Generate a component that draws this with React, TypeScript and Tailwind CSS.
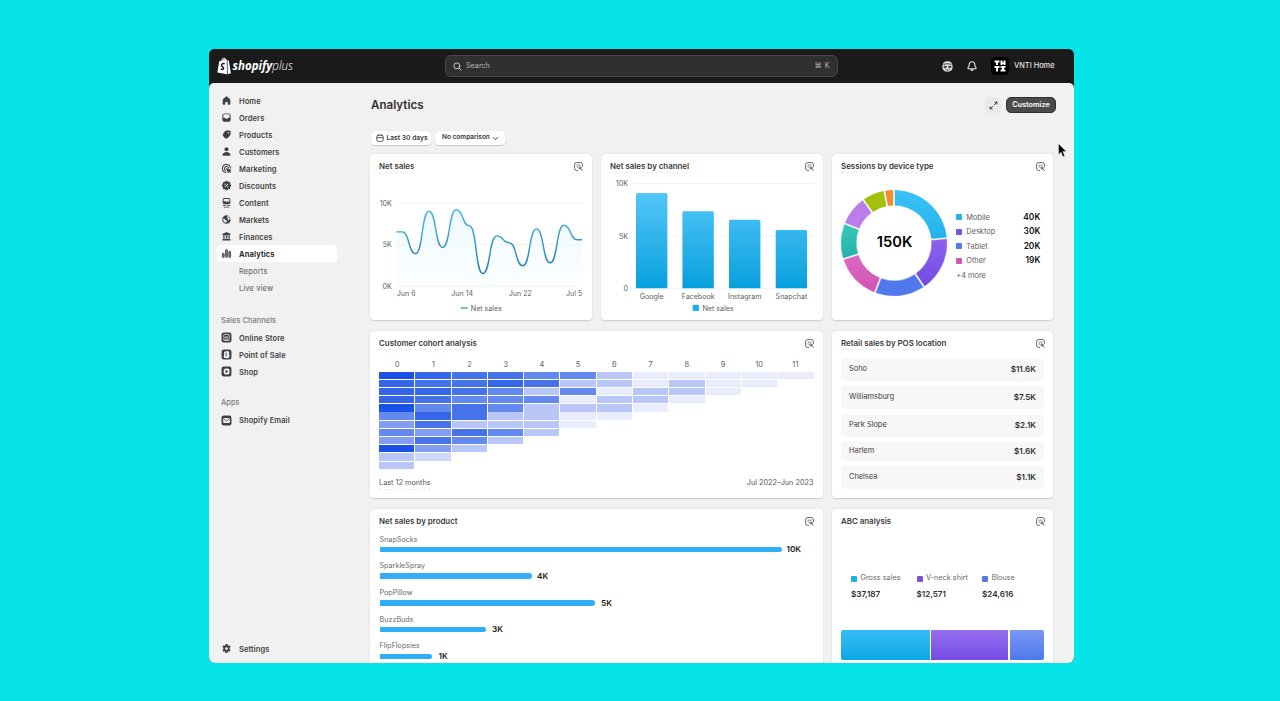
import React from "react";

const Svg = ({ children }: { children: React.ReactNode }) => (
  <svg viewBox="0 0 20 20" className="size-[11px] shrink-0" fill="currentColor">
    {children}
  </svg>
);

const HomeIcon = () => (
  <Svg>
    <path d="M8.6 3.1a2.1 2.1 0 0 1 2.8 0l4.6 4.3c.6.6 1 1.4 1 2.2V16c0 .8-.6 1.5-1.4 1.5h-2.4c-.5 0-.9-.4-.9-.9v-3.1c0-.6-.4-1-1-1H8.700c-.6 0-1 .4-1 1v3.100c0 .5-.4.9-.9.9H4.400C3.600 17.500 3 16.800 3 16V9.600c0-.8.4-1.600 1-2.200z" />
  </Svg>
);
const OrdersIcon = () => (
  <Svg>
    <path fillRule="evenodd" d="M6 2.500h8A3.500 3.500 0 0 1 17.500 6v8a3.500 3.500 0 0 1-3.500 3.500H6A3.500 3.500 0 0 1 2.500 14V6A3.500 3.500 0 0 1 6 2.500zM4.300 6v4.500h2.500c.7 0 1 .4 1.200 1 .3.700.8 1 2 1s1.700-.3 2-1c.2-.6.5-1 1.200-1h2.500V6c0-1-.8-1.800-1.700-1.800H6C5.100 4.200 4.300 5 4.300 6z" />
  </Svg>
);
const ProductsIcon = () => (
  <Svg>
    <path fillRule="evenodd" d="M10.500 2.700h4.700a2.300 2.300 0 0 1 2.300 2.300v3.700c0 1.300-.5 2.500-1.400 3.400l-4.200 4.200a3.400 3.400 0 0 1-4.800 0l-3-3a3.400 3.400 0 0 1 0-4.800l3-4.400c.9-.9 2.100-1.400 3.400-1.400zM13.600 8a1.300 1.300 0 1 0 0-2.600 1.300 1.300 0 0 0 0 2.600z" />
  </Svg>
);
const PersonIcon = () => (
  <Svg>
    <circle cx="10" cy="6" r="3.700" />
    <path d="M2.800 15.400c1-3 3.800-4.600 7.200-4.600s6.200 1.600 7.200 4.600c.4 1.200-.5 2.100-1.600 2.100H4.400c-1.100 0-2-.9-1.600-2.100z" />
  </Svg>
);
const TargetIcon = () => (
  <Svg>
    <g fill="none" stroke="currentColor" strokeWidth="1.900" strokeLinecap="round">
      <path d="M17.200 9.300a7.300 7.300 0 1 0-8 7.900" />
      <path d="M13.500 9a3.700 3.700 0 1 0-4.800 4.500" />
    </g>
    <path d="M9.800 9.300l8.400 3c.6.2.6 1 0 1.200l-2 .9 2 2-1.600 1.600-2.100-2-.9 2c-.3.500-1 .5-1.200-.1l-3-8c-.1-.4.100-.7.400-.6z" />
  </Svg>
);
const DiscountIcon = () => (
  <Svg>
    <path fillRule="evenodd" d="M8.200 2.300a2.500 2.500 0 0 1 3.600 0l.8.800h1.200A2.600 2.600 0 0 1 16.800 6v1.200l.9 1a2.500 2.500 0 0 1 0 3.600l-.9.900V14a2.800 2.800 0 0 1-2.800 2.800h-1.300l-.9.900a2.500 2.500 0 0 1-3.600 0l-.9-.9H6A2.800 2.800 0 0 1 3.200 14v-1.300l-.9-.9a2.500 2.500 0 0 1 0-3.600l.9-.9V6A2.800 2.800 0 0 1 6 3.200h1.300zM7.500 8.700a1.200 1.200 0 1 0 0-2.400 1.200 1.200 0 0 0 0 2.400zm5.900-1.100-1-1-5.800 5.800 1 1zm-.9 6.100a1.200 1.200 0 1 0 0-2.400 1.200 1.200 0 0 0 0 2.400z" />
  </Svg>
);
const ContentIcon = () => (
  <Svg>
    <path fillRule="evenodd" d="M6 2h8a3 3 0 0 1 3 3v5a3 3 0 0 1-3 3H6a3 3 0 0 1-3-3V5a3 3 0 0 1 3-3zM4.800 8.500 7 7.200l2.500 2 3-1.400 2.700 1.500V5c0-.8-.5-1.300-1.200-1.300H6c-.7 0-1.200.5-1.200 1.300z" />
    <path d="M3 15h6v1.500H3zM11 15h6v1.500h-6zM5 17.500h10V19H5z" />
  </Svg>
);
const GlobeIcon = () => (
  <Svg>
    <path fillRule="evenodd" d="M10 2.300a7.700 7.700 0 1 0 7.700 7.700l-2.500-.7-1.200 2.400-2.100-1.200.8-2.700-2.200-1.300L12 4.100l2.400.1A7.700 7.700 0 0 0 10 2.300zm-4.800 5 2.300 3.500 2.500.7.700 2.200-1.500 2.300c-3.200-.5-5.400-3.200-5.200-6.500z" />
    <path d="M14.500 4.600l2.500 3-2.200.5-1.300-1.600zM13 13.300l2.800.4-1.700 2z" />
  </Svg>
);
const BankIcon = () => (
  <Svg>
    <path d="M9.300 2.200a1.500 1.500 0 0 1 1.400 0l6 2.900c1.300.6.8 2.500-.6 2.500H3.900c-1.400 0-1.900-1.900-.6-2.500zM4 8.300h2.500v5H4zM8.700 8.300h2.600v5H8.700zM13.500 8.300H16v5h-2.500zM3.700 14.200h12.600c1 0 1.600 3 .3 3H3.400c-1.300 0-.7-3 .3-3z" />
  </Svg>
);
const ChartIcon = () => (
  <Svg>
    <g fill="#8a8a8a" stroke="currentColor" strokeWidth="1.600">
      <rect x="2.500" y="9.500" width="3.200" height="7.800" rx="1.500" />
      <rect x="8.400" y="2.800" width="3.200" height="14.500" rx="1.500" />
      <rect x="14.300" y="6" width="3.200" height="11.300" rx="1.500" />
    </g>
  </Svg>
);
const StoreTile = () => (
  <Svg>
    <rect x="1" y="1" width="18" height="18" rx="4" />
    <g fill="none" stroke="#f1f1f1" strokeWidth="1.300">
      <path d="M5.500 4.500h9l1 4c0 2-2.700 2-2.800 0 0 2-2.700 2-2.700 0 0 2-2.700 2-2.700 0 0 2-2.800 2-2.800 0zM5.200 11v4.500h9.600V11M8.500 15.500v-3h3v3" />
    </g>
  </Svg>
);
const PosTile = () => (
  <Svg>
    <rect x="1" y="1" width="18" height="18" rx="4" />
    <path d="M6 5l6-1.500 2.500 1.500.8 10.500L11 17l-6-1z" fill="#f1f1f1" />
    <path d="M11.200 8c-2.500-.8-3.500 1.200-1.600 2.300 1.800 1 .5 2.800-1.500 1.900" fill="none" stroke="#303030" strokeWidth="1.500" />
  </Svg>
);
const ShopTile = () => (
  <Svg>
    <rect x="1" y="1" width="18" height="18" rx="4" />
    <rect x="5" y="4.500" width="10.500" height="11" rx="3.500" fill="#f1f1f1" />
    <path d="M8.300 7l5 3-5 3z" />
  </Svg>
);
const MailTile = () => (
  <Svg>
    <rect x="1" y="1" width="18" height="18" rx="4" />
    <rect x="4" y="5.500" width="12" height="9" rx="1.500" fill="#f1f1f1" />
    <path d="M4.500 6.500 10 11l5.500-4.500" fill="none" stroke="#303030" strokeWidth="1.300" />
  </Svg>
);
const GearIcon = () => (
  <Svg>
    <path fillRule="evenodd" d="M8.400 2h3.200l.6 2.300 1.200.7 2.300-.7 1.600 2.800-1.600 1.700v2.400l1.600 1.700-1.600 2.800-2.300-.7-1.200.7-.6 2.300H8.400L7.800 15.700 6.600 15l-2.300.7-1.600-2.800 1.600-1.700V8.800L2.700 7.100l1.600-2.800 2.300.7 1.200-.7zM10 12.500a2.500 2.500 0 1 0 0-5 2.500 2.500 0 0 0 0 5z" />
  </Svg>
);

const ReportIcon = () => (
  <svg viewBox="0 0 20 20" className="size-[11px] shrink-0" fill="none" stroke="#484848" strokeWidth="1.500" strokeLinecap="round" strokeLinejoin="round">
    <path d="M8.500 17.200H6.800A4 4 0 0 1 2.800 13.200V6.800a4 4 0 0 1 4-4h6.400a4 4 0 0 1 4 4V10" />
    <path d="M7 7.500h6M7 10.800h1.500" strokeWidth="1.200" />
    <circle cx="12.600" cy="12.600" r="2" />
    <path d="M14.300 14.300l2.600 2.600" />
  </svg>
);

const NAV = [
  { label: "Home", icon: <HomeIcon /> },
  { label: "Orders", icon: <OrdersIcon /> },
  { label: "Products", icon: <ProductsIcon /> },
  { label: "Customers", icon: <PersonIcon /> },
  { label: "Marketing", icon: <TargetIcon /> },
  { label: "Discounts", icon: <DiscountIcon /> },
  { label: "Content", icon: <ContentIcon /> },
  { label: "Markets", icon: <GlobeIcon /> },
  { label: "Finances", icon: <BankIcon /> },
  { label: "Analytics", icon: <ChartIcon />, active: true },
];

function NavItem({ label, icon, active }: { label: string; icon?: React.ReactNode; active?: boolean }) {
  return (
    <div
      className={`flex h-[17px] w-[120px] items-center gap-[7px] rounded-[4px] pl-1 text-[7.500px] tracking-[0.100px] ${
        active ? "bg-white font-bold text-[#303030]" : icon ? "font-semibold text-[#3f3f3f]" : "font-medium text-[#747474]"
      }`}
    >
      <span className="flex size-[11px] text-[#404040]">{icon}</span>
      <span className="pt-[1.500px]">{label}</span>
    </div>
  );
}

function NavHeading({ label, className }: { label: string; className: string }) {
  return (
    <div className={`mb-px flex h-[17px] items-center pt-[1.500px] pl-1 text-[7.500px] font-medium text-[#7c7c7c] ${className}`}>
      {label}
    </div>
  );
}

function Sidebar() {
  return (
    <nav className="flex w-[161px] shrink-0 flex-col pt-[9px] pl-2">
      {NAV.map((n) => (
        <NavItem key={n.label} {...n} />
      ))}
      <NavItem label="Reports" />
      <NavItem label="Live view" />
      <NavHeading label="Sales Channels" className="mt-[15px]" />
      <NavItem label="Online Store" icon={<StoreTile />} />
      <NavItem label="Point of Sale" icon={<PosTile />} />
      <NavItem label="Shop" icon={<ShopTile />} />
      <NavHeading label="Apps" className="mt-[13.500px]" />
      <NavItem label="Shopify Email" icon={<MailTile />} />
      <div className="mt-auto mb-[6px]">
        <NavItem label="Settings" icon={<GearIcon />} />
      </div>
    </nav>
  );
}

function TopBar() {
  return (
    <header className="flex h-[34px] shrink-0 items-center bg-[#1a1a1a] pl-2">
      <svg viewBox="0 0 78 20" className="h-5 w-[78px]">
        <path d="M2.200 5.300 4.200 4.700C4.600 2.900 5.600 1.700 7 1.700c.7 0 1.200.4 1.400 1.100.9.100 1.200.7 1.400 1.100L10 18.300.300 16.600z" fill="#fff" />
        <path d="M10.500 4.300l1.300.3 2.100 12.600-3.200 1.100z" fill="#fff" />
        <path d="M5.100 4.600C5.500 3.400 6.100 2.700 6.800 2.600c.4.300.5.900.5 1.500" fill="none" stroke="#1a1a1a" strokeWidth=".6" />
        <path d="M7.700 7.700C5.700 6.900 4 8.500 4.700 9.900c.6 1.100 2.100 1.400 1.900 2.700-.2 1.200-1.600 1-2.800.2" fill="none" stroke="#1a1a1a" strokeWidth="1.500" />
        <text x="15.500" y="14" textLength="60.500" lengthAdjust="spacingAndGlyphs" fill="#fff" className="font-['Open_Sans'] text-[11.800px] italic">
          <tspan className="font-bold">shopify</tspan>
          <tspan className="font-light">plus</tspan>
        </text>
      </svg>
      <div className="ml-[150px] flex h-[22px] w-[393px] items-center rounded-[6px] border border-[#484848] bg-[#303030] px-[7px] text-[7.200px] text-[#b5b5b5]">
        <svg viewBox="0 0 10 10" className="size-[9px]" fill="none" stroke="#c8c8c8" strokeWidth="1.100" strokeLinecap="round">
          <circle cx="4.300" cy="4.300" r="3.300" />
          <path d="M6.800 6.800l2.400 2.400" />
        </svg>
        <span className="ml-1 pt-[1.500px]">Search</span>
        <span className="ml-auto pt-[1.500px] tracking-[0.500px]">⌘ K</span>
      </div>
      <svg viewBox="0 0 20 20" className="ml-[103px] size-[13px]" fill="#e3e3e3">
        <path d="M3.200 6.500C3 3.600 6 2 10 2s7 1.600 6.800 4.500c1.200 1.300 1.400 3.700.8 6-.4 3.200-3.600 5.500-7.600 5.500s-7.200-2.300-7.600-5.500c-.6-2.300-.4-4.700.8-6z" />
        <g fill="none" stroke="#1a1a1a" strokeWidth="1.300">
          <path d="M4 6.800c3.500-1.300 8.500-1.300 12 0M4.500 9.500l4 .5-.8 2H5.200zM15.500 9.500l-4 .5.8 2h2.500zM7 15c2 .8 4 .8 6 0" />
        </g>
      </svg>
      <svg viewBox="0 0 20 20" className="ml-[11.500px] size-[12px]" fill="none" stroke="#e3e3e3" strokeWidth="1.800" strokeLinejoin="round">
        <path d="M10 3C7 3 5.300 5.200 5.300 8c0 2.500-1 3.300-2 4.700-.6.900 0 1.800 1 1.800h11.400c1 0 1.600-.9 1-1.800-1-1.400-2-2.200-2-4.700C14.700 5.200 13 3 10 3zM8 15c0 3 4 3 4 0" />
      </svg>
      <svg viewBox="0 0 18 18" className="ml-[13.500px] size-[18px]">
        <rect width="18" height="18" rx="4.500" fill="#000" />
        <path d="M3.500 3.500h5v2H7V8H5V5.500H3.500zM9.500 3.500h2v2h1v-2h2V8h-2V7h-1v1h-2zM3.500 9h5v2H7v3.500H5V11H3.500zM9.500 9h5v1.800h-1.300v1.900h1.300v1.800h-5v-1.800h1.300v-1.900H9.500z" fill="#fff" />
      </svg>
      <span className="ml-[5px] text-[7.400px] font-medium text-[#e3e3e3]">VNTI Home</span>
    </header>
  );
}

function Card({ title, className = "", children }: { title: string; className?: string; children: React.ReactNode }) {
  return (
    <section className={`flex flex-col overflow-hidden rounded-[4px] bg-white shadow-[0_0.500px_1.500px_rgba(0,0,0,0.16)] ${className}`}>
      <div className="flex h-[25px] shrink-0 items-center justify-between pr-[7.500px] pl-[9px]">
        <h2 className="border-b border-dashed border-[#ececec] text-[7.900px] leading-[12px] font-semibold text-[#3a3a3a]">{title}</h2>
        <ReportIcon />
      </div>
      {children}
    </section>
  );
}

const LINE: [number, number][] = [
  [402.5, 231.4], [415.7, 253.2], [429.2, 210.8], [442.8, 247], [456.4, 209.3], [469.6, 225.3], [483, 273],
  [497, 235.4], [509.6, 242.4], [523, 265.3], [536.7, 228.4], [550.3, 262.3], [564, 224.8], [577.5, 239.3],
];
const linePath =
  "M396.7 231.4H402.5" +
  LINE.slice(1)
    .map(([x, y], i) => {
      const [px, py] = LINE[i];
      const m = (x - px) * 0.56;
      return `C${px + m} ${py} ${x - m} ${y} ${x} ${y}`;
    })
    .join("") +
  "H582.5";

function NetSales() {
  return (
    <svg viewBox="370.200 178.500 221.500 141" className="h-[141px] w-full" fontSize="7.100" fill="#616161">
      <defs>
        <linearGradient id="area" x1="0" y1="0" x2="0" y2="1">
          <stop offset="0" stopColor="#e6f6ff" stopOpacity=".8" />
          <stop offset="1" stopColor="#f4fbff" stopOpacity=".3" />
        </linearGradient>
        <linearGradient id="stroke" x1="0" y1="0" x2="0" y2="1">
          <stop offset="0" stopColor="#4fb6e0" />
          <stop offset="1" stopColor="#1d7fb0" />
        </linearGradient>
      </defs>
      <path d="M397 202.500H583M397 244H583M397 285.500H583" stroke="#efefef" strokeWidth=".8" />
      <path d={`${linePath}V285.500H396.700Z`} fill="url(#area)" />
      <path d={linePath} fill="none" stroke="url(#stroke)" strokeWidth="1.400" />
      <g textAnchor="end">
        <text x="392" y="205">10K</text>
        <text x="392" y="246.500">5K</text>
        <text x="392" y="288">0K</text>
        <text x="582.500" y="295.500">Jul 5</text>
      </g>
      <text x="397" y="295.500">Jun 6</text>
      <text x="451.500" y="295.500">Jun 14</text>
      <text x="509" y="295.500">Jun 22</text>
      <path d="M461 307.500h7" stroke="#3aa8dc" strokeWidth="1.400" />
      <text x="471" y="310">Net sales</text>
    </svg>
  );
}

const BARS = [
  { label: "Google", x: 636, y: 192.6 },
  { label: "Facebook", x: 682.4, y: 210.7 },
  { label: "Instagram", x: 729, y: 219.3 },
  { label: "Snapchat", x: 775.7, y: 229.4 },
];

function ChannelChart() {
  return (
    <svg viewBox="601 178.500 221.500 141" className="h-[141px] w-full" fontSize="7.100" fill="#616161">
      <defs>
        <linearGradient id="bar" gradientUnits="userSpaceOnUse" x1="0" y1="192" x2="0" y2="288">
          <stop offset="0" stopColor="#54c6f8" />
          <stop offset="1" stopColor="#07a0dc" />
        </linearGradient>
      </defs>
      <path d="M633 183H815M633 235.500H815M633 288.300H815" stroke="#efefef" strokeWidth=".8" />
      {BARS.map((b) => (
        <g key={b.label}>
          <path d={`M${b.x} 287.800V${b.y + 1.5}q0-1.500 1.500-1.500h28.400q1.500 0 1.500 1.500V287.800z`} fill="url(#bar)" />
          <text x={b.x + 15.7} y="298" textAnchor="middle">{b.label}</text>
        </g>
      ))}
      <g textAnchor="end">
        <text x="628" y="185.500">10K</text>
        <text x="628" y="238">5K</text>
        <text x="628" y="290.500">0</text>
      </g>
      <rect x="692.700" y="304.300" width="6.200" height="6.200" rx="1" fill="#1fb0ec" />
      <text x="702.500" y="310">Net sales</text>
    </svg>
  );
}

const ARCS: [number, number, string][] = [
  [0, 84.8, "url(#d0)"],
  [84.8, 145.5, "url(#d1)"],
  [145.5, 201, "#4f78ea"],
  [201, 252.5, "url(#d3)"],
  [252.5, 291.5, "url(#d4)"],
  [291.5, 324.5, "#bb7dea"],
  [324.5, 349.5, "#a3c10c"],
  [349.5, 360, "#f08c35"],
];

function arcPath(a: number, b: number) {
  const R = 52.8;
  const r = 37.8;
  const p = (rad: number, deg: number) => {
    const t = ((deg - 90) * Math.PI) / 180;
    return `${(54 + rad * Math.cos(t)).toFixed(2)} ${(54 + rad * Math.sin(t)).toFixed(2)}`;
  };
  const go = 1.1;
  const gi = 1.5;
  return `M${p(R, a + go)}A${R} ${R} 0 0 1 ${p(R, b - go)}L${p(r, b - gi)}A${r} ${r} 0 0 0 ${p(r, a + gi)}Z`;
}

const DEVICES = [
  { label: "Mobile", value: "40K", dot: "bg-[#22b4ee]" },
  { label: "Desktop", value: "30K", dot: "bg-[#7b52dc]" },
  { label: "Tablet", value: "20K", dot: "bg-[#5579ea]" },
  { label: "Other", value: "19K", dot: "bg-[#cf57b5]" },
];

function Devices() {
  return (
    <div className="flex pt-[10.500px] pl-[8.300px]">
      <svg viewBox="0 0 108 108" className="size-[108px] shrink-0">
        <defs>
          <linearGradient id="d0" x1="0" y1="0" x2="0" y2="1"><stop stopColor="#3bc2f6" /><stop offset="1" stopColor="#22b2ee" /></linearGradient>
          <linearGradient id="d1" x1="0" y1="0" x2="0" y2="1"><stop stopColor="#8b63ec" /><stop offset="1" stopColor="#7549e4" /></linearGradient>
          <linearGradient id="d3" x1="0" y1="0" x2="0" y2="1"><stop stopColor="#dc68c4" /><stop offset="1" stopColor="#d154b2" /></linearGradient>
          <linearGradient id="d4" x1="0" y1="0" x2="0" y2="1"><stop stopColor="#38c8ba" /><stop offset="1" stopColor="#22b3a6" /></linearGradient>
        </defs>
        {ARCS.map(([a, b, c]) => (
          <path key={a} d={arcPath(a, b)} fill={c} stroke={c} strokeWidth=".5" strokeLinejoin="round" />
        ))}
        <text x="54.500" y="58.200" textAnchor="middle" fontSize="14.700" fill="#000" className="font-semibold">150K</text>
      </svg>
      <div className="ml-[8px] flex w-[84px] flex-col pt-[21px]">
        {DEVICES.map((d) => (
          <div key={d.label} className="flex h-[14.500px] items-center text-[7.400px] text-[#616161]">
            <span className={`mr-1 size-[6px] rounded-[1px] ${d.dot}`} />
            {d.label}
            <span className="ml-auto text-[8.400px] font-semibold text-[#111]">{d.value}</span>
          </div>
        ))}
        <div className="flex h-[14.500px] items-center text-[7.400px] text-[#616161]">+4 more</div>
      </div>
    </div>
  );
}

const SHADES: Record<string, string> = {
  A: "bg-[#1c51e8]",
  B: "bg-[#3566e9]",
  C: "bg-[#4672ea]",
  D: "bg-[#6489ee]",
  E: "bg-[#839ef1]",
  F: "bg-[#b8c6f8]",
  G: "bg-[#cfd8fb]",
  H: "bg-[#e8ecfd]",
};
const COHORT = ["ABCCDDFHHHHH", "BCCBCFFHFHH", "BBCDFDHFFH", "BCDDDHFFH", "ADCDFFFH", "DBCFFHH", "ECFFFH", "DECDF", "ECDF", "AEF", "FG", "F"];

function Cohort() {
  return (
    <div className="flex flex-col px-[9px]">
      <div className="grid grid-cols-12 pt-[2.500px]">
        {COHORT.map((_, i) => (
          <span key={i} className="text-center text-[7.500px] leading-[12px] text-[#616161]">{i}</span>
        ))}
      </div>
      <div className="mt-px flex flex-col">
        {COHORT.map((row, i) => (
          <div key={i} className="grid h-[8.200px] grid-cols-12 gap-x-px pb-[0.900px]">
            {row.split("").map((c, j) => (
              <span key={j} className={SHADES[c]} />
            ))}
          </div>
        ))}
      </div>
      <div className="mt-[7px] flex justify-between text-[7.300px] leading-[12px] text-[#555]">
        <span className="border-b border-dashed border-[#ececec]">Last 12 months</span>
        <span>Jul 2022–Jun 2023</span>
      </div>
    </div>
  );
}

const STORES = [
  { name: "Soho", value: "$11.6K", box: "h-[23px] mb-[5px]" },
  { name: "Williamsburg", value: "$7.5K", box: "h-[23px] mb-[5px]" },
  { name: "Park Slope", value: "$2.1K", box: "h-[23px] mb-[5px]" },
  { name: "Harlem", value: "$1.6K", box: "h-[19px] mb-[5px]" },
  { name: "Chelsea", value: "$1.1K", box: "h-[23px]" },
];

const PRODUCTS = [
  { name: "SnapSocks", value: "10K", w: 402, gap: "ml-[5px]" },
  { name: "SparkleSpray", value: "4K", w: 152.5, gap: "ml-[5px]" },
  { name: "PopPillow", value: "5K", w: 215, gap: "ml-[6.500px]" },
  { name: "BuzzBuds", value: "3K", w: 106, gap: "ml-[6.500px]" },
  { name: "FlipFlopsies", value: "1K", w: 52.5, gap: "ml-[6.500px]" },
];

const ABC = [
  { name: "Gross sales", value: "$37,187", dot: "bg-[#1fb0ec]" },
  { name: "V-neck shirt", value: "$12,571", dot: "bg-[#7b52dc]" },
  { name: "Blouse", value: "$24,616", dot: "bg-[#5579ea]" },
];

export default function App() {
  return (
    <div className="flex h-[701px] w-[1280px] justify-start overflow-hidden bg-[#06e3e9] pt-[49px] pl-[209px] font-['Inter',sans-serif]">
      <div className="flex h-[614px] w-[865px] flex-col overflow-hidden rounded-[6px] bg-[#1a1a1a]">
        <TopBar />
        <div className="flex min-h-0 flex-1 rounded-t-[5px] bg-[#f1f1f1]">
          <Sidebar />
          <main className="flex min-w-0 flex-1 flex-col">
            <div className="mt-[14px] flex h-4 shrink-0 items-center pr-[18px] pl-px">
              <h1 className="pt-px text-[11.600px] font-semibold text-[#303030]">Analytics</h1>
              <div className="ml-auto flex size-4 items-center justify-center rounded-[4px] bg-[#e9e9e9]">
                <svg viewBox="0 0 10 10" className="size-[9px]" fill="none" stroke="#303030" strokeWidth="1" strokeLinecap="round" strokeLinejoin="round">
                  <path d="M6.500 1.200h2.300v2.300M8.600 1.400 5.900 4.100M3.500 8.800H1.200V6.500M1.400 8.600l2.700-2.700" />
                </svg>
              </div>
              <div className="ml-[5px] flex h-4 w-[50px] items-center justify-center rounded-[5px] border border-[#303030] bg-[#4a4a4a] text-[7.200px] font-bold text-[#f0f0f0]">
                <span className="pt-px">Customize</span>
              </div>
            </div>
            <div className="mt-[18px] flex h-[14px] shrink-0 gap-[4px] pl-[1px] text-[6.900px] font-semibold text-[#383838]">
              <div className="flex w-[60px] items-center rounded-[4px] bg-white pl-[5px] shadow-[0_0.500px_1px_rgba(0,0,0,0.18)]">
                <svg viewBox="0 0 10 10" className="mr-[2.500px] size-[8px] shrink-0" fill="none" stroke="#303030" strokeWidth="1">
                  <rect x="1" y="1.500" width="8" height="7.800" rx="2" />
                  <path d="M1 4.600h8M3.200.3v1.800M6.800.3v1.800" />
                </svg>
                <span className="text-[6.700px] whitespace-nowrap">Last 30 days</span>
              </div>
              <div className="flex w-[70px] items-center rounded-[4px] bg-white pl-[7px] shadow-[0_0.500px_1px_rgba(0,0,0,0.18)]">
                <span className="text-[6.500px] whitespace-nowrap">No comparison</span>
                <svg viewBox="0 0 10 10" className="ml-[2.500px] size-[7px] shrink-0" fill="none" stroke="#303030" strokeWidth="1.300" strokeLinecap="round" strokeLinejoin="round">
                  <path d="M2 3.700l3 3 3-3" />
                </svg>
              </div>
            </div>
            <div className="mt-[8.500px] grid w-[683px] shrink-0 grid-cols-[221.500px_221.500px_221px] grid-rows-[166.500px_167px_180px] gap-x-[9.500px] gap-y-[11px]">
              <Card title="Net sales"><NetSales /></Card>
              <Card title="Net sales by channel"><ChannelChart /></Card>
              <Card title="Sessions by device type"><Devices /></Card>
              <Card title="Customer cohort analysis" className="col-span-2"><Cohort /></Card>
              <Card title="Retail sales by POS location">
                <div className="flex flex-col pt-[1.500px] pr-[9px] pl-[9px]">
                  {STORES.map((s) => (
                    <div key={s.name} className={`flex items-center justify-between rounded-[4px] bg-[#f7f7f7] px-2 ${s.box}`}>
                      <span className="text-[7.400px] text-[#404040]">{s.name}</span>
                      <span className="text-[8.100px] font-semibold text-[#303030]">{s.value}</span>
                    </div>
                  ))}
                </div>
              </Card>
              <Card title="Net sales by product" className="col-span-2">
                <div className="flex flex-col pt-[0.500px] pl-[9.500px]">
                  {PRODUCTS.map((p) => (
                    <div key={p.name} className="flex h-[26.700px] flex-col">
                      <span className="text-[7.200px] leading-[10.500px] text-[#6a6a6a]">{p.name}</span>
                      <div className="flex h-[9px] items-center">
                        <span className="h-[5.500px] rounded-r-full bg-[#30aef8]" style={{ width: p.w }} />
                        <span className={`text-[8.200px] font-semibold text-[#222] ${p.gap}`}>{p.value}</span>
                      </div>
                    </div>
                  ))}
                </div>
              </Card>
              <Card title="ABC analysis">
                <div className="grid grid-cols-[65.500px_65.500px_1fr] pt-[37.500px] pl-[19px]">
                  {ABC.map((a) => (
                    <div key={a.name} className="flex flex-col">
                      <span className="flex h-[14px] items-center text-[7.300px] whitespace-nowrap text-[#6a6a6a]">
                        <span className={`mr-[3.500px] size-[6px] rounded-[1px] ${a.dot}`} />
                        {a.name}
                      </span>
                      <span className="mt-[1px] flex h-4 items-center text-[8.100px] font-semibold text-[#303030]">{a.value}</span>
                    </div>
                  ))}
                </div>
                <div className="mt-[27.500px] flex h-[29.500px] shrink-0 gap-[1.500px] px-[9px]">
                  <span className="w-[88.500px] rounded-l-[2px] bg-linear-to-b from-[#35bdf3] to-[#07a8e6]" />
                  <span className="w-[77px] bg-linear-to-b from-[#9670ee] to-[#7648e4]" />
                  <span className="flex-1 rounded-r-[2px] bg-linear-to-b from-[#7a98f2] to-[#4e78ec]" />
                </div>
              </Card>
            </div>
          </main>
        </div>
      </div>
      <svg viewBox="0 0 9 15" className="absolute top-[143px] left-[1058px] h-[15px] w-[9px]">
        <path d="M.5.700v10.800l2.500-2.300 2 4.500 1.800-.8-2-4.400h3.500z" fill="#000" stroke="#fff" strokeWidth=".4" />
      </svg>
    </div>
  );
}
